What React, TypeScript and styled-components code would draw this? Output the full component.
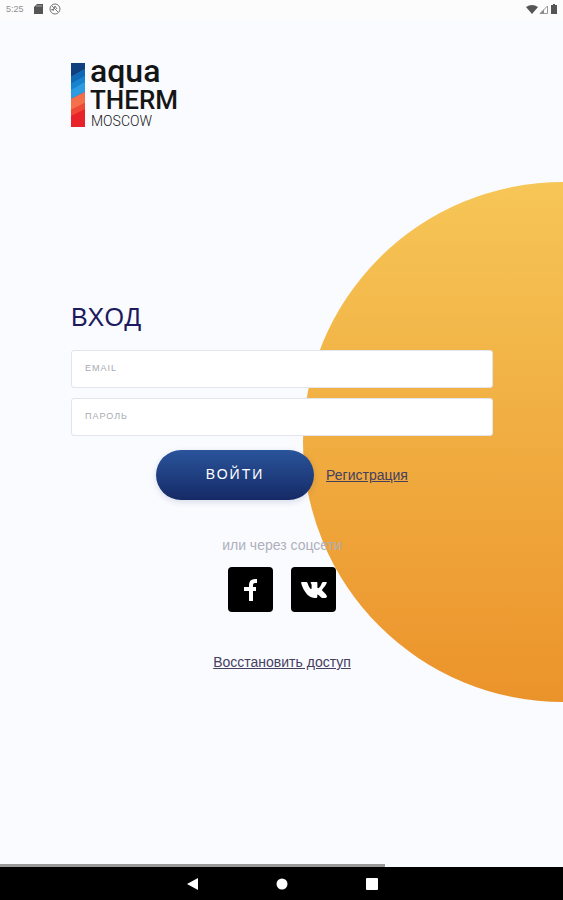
import React from 'react';
import styled, { createGlobalStyle } from 'styled-components';

const GlobalStyle = createGlobalStyle`
  * {
    box-sizing: border-box;
  }

  body {
    margin: 0;
    background: #fafbff;
    font-family: 'Liberation Sans', Arial, sans-serif;
  }
`;

const Page = styled.div`
  position: relative;
  display: flex;
  flex-direction: column;
  min-height: 100vh;
  overflow: hidden;
`;

// the sun behind the form, half of it is off screen
const Sun = styled.div`
  position: absolute;
  top: 182px;
  right: -260px;
  width: 520px;
  height: 520px;
  border-radius: 50%;
  background: linear-gradient(#f6c656, #eb932b);
`;

const StatusBar = styled.header`
  display: flex;
  align-items: center;
  height: 20px;
  padding: 0 4px 2px 6px;
  background: #fcfcfd;
  color: #909090;
  font-size: 9px;
`;

const StatusIcons = styled.div<{ $end?: boolean }>`
  display: flex;
  align-items: center;
  gap: ${({ $end }) => ($end ? '1px' : '6px')};
  margin-left: ${({ $end }) => ($end ? 'auto' : '10px')};
`;

const Main = styled.main`
  position: relative;
  display: flex;
  flex: 1;
  flex-direction: column;
  padding: 43px 70px 0 71px;
`;

const Logo = styled.div`
  display: flex;
  gap: 5px;
  height: 64px;
  font-family: Roboto, sans-serif;
  color: #151515;
`;

const LogoText = styled.div`
  display: flex;
  flex-direction: column;
`;

const LogoLine = styled.span<{ $size: number; $height: number; $gap?: number; $thin?: boolean }>`
  margin-bottom: ${({ $gap = 0 }) => $gap}px;
  font-size: ${({ $size }) => $size}px;
  line-height: ${({ $height }) => $height}px;
  font-weight: ${({ $thin }) => ($thin ? 300 : 500)};
  padding-left: ${({ $thin }) => ($thin ? 1 : 0)}px;
`;

const Form = styled.form`
  display: flex;
  flex-direction: column;
  margin-top: 174px;
`;

const Title = styled.h1`
  margin: 0 0 17px;
  color: #1d1a5e;
  font-size: 25px;
  font-weight: 400;
  line-height: 32px;
  letter-spacing: 1px;
`;

const Field = styled.input`
  width: 100%;
  height: 38px;
  margin-bottom: 10px;
  padding: 0 13px 2px;
  border: 1px solid #e4e5ec;
  border-radius: 3px;
  background: #fff;
  color: #1d1a5e;
  font-family: inherit;
  font-size: 9px;
  letter-spacing: 1px;

  &::placeholder {
    color: #a9aab2;
    opacity: 1;
  }
`;

const Actions = styled.div`
  display: flex;
  align-items: center;
  justify-content: center;
  gap: 12px;
  margin-top: 4px;
`;

const SubmitButton = styled.button`
  width: 158px;
  height: 50px;
  padding: 0 0 2px;
  border: 0;
  border-radius: 25px;
  background: linear-gradient(#2a549b, #152a66);
  box-shadow: 0 2px 6px rgba(21, 42, 102, 0.15);
  color: #fff;
  font-family: inherit;
  font-size: 14px;
  letter-spacing: 2px;
  cursor: pointer;
`;

const TextLink = styled.a`
  color: #45405f;
  font-size: 14px;
  line-height: 20px;
`;

const Social = styled.section`
  display: flex;
  flex-direction: column;
  align-items: center;
  margin-top: 35px;
`;

const SocialTitle = styled.p`
  margin: 0 0 12px;
  color: #aeafbb;
  font-size: 14px;
  line-height: 20px;
`;

const SocialList = styled.div`
  display: flex;
  gap: 18px;
`;

const SocialButton = styled.button`
  display: flex;
  align-items: center;
  justify-content: center;
  width: 45px;
  height: 45px;
  padding: 0;
  border: 0;
  border-radius: 4px;
  background: #000;
  color: #fff;
  cursor: pointer;
`;

const Restore = styled.div`
  margin-top: 40px;
  text-align: center;
`;

const Progress = styled.div`
  position: relative;
  height: 3px;
`;

const ProgressValue = styled.div`
  width: 68.4%;
  height: 100%;
  background: #999;
`;

const NavBar = styled.nav`
  position: relative;
  display: flex;
  align-items: center;
  justify-content: center;
  gap: 66px;
  height: 33px;
  background: #000;
`;

const NavButton = styled.button`
  display: flex;
  align-items: center;
  justify-content: center;
  width: 24px;
  height: 24px;
  padding: 0;
  border: 0;
  background: none;
  color: #fff;
`;

const LogoMark = () => (
  <svg width="14" height="64" viewBox="0 0 14 64" aria-hidden="true">
    <rect width="14" height="64" fill="#e8222b" />
    <path d="M0 0H14V29L0 36Z" fill="#2d9be0" />
    <path d="M0 0H14V6L0 14Z" fill="#123f7d" />
    <path d="M0 14L14 6V13L0 21Z" fill="#0f69b4" />
    <path d="M0 21L14 13V19L0 27Z" fill="#1683d0" />
    <path d="M0 36L14 29V40L0 47Z" fill="#f4704a" />
    <path d="M0 47L14 40V46L0 53Z" fill="#ee4936" />
  </svg>
);

const FacebookIcon = () => (
  <svg width="26" height="24" viewBox="0 0 26 24" fill="none" stroke="currentColor" strokeWidth="4">
    <path d="M19 3H17Q13 3 13 7V23M6 11H18" />
  </svg>
);

const VkIcon = () => (
  <svg width="26" height="20" viewBox="0 0 26 20" fill="currentColor">
    <path d="M1 2H5C6 2 6.300 2.500 6.600 3.300C7.700 6.500 9 9 10 9C10.500 9 10.600 8.500 10.600 7.500V5C10.500 3.600 9.600 3.500 9.600 2.800C9.600 2.300 10 2 10.500 2H15.500C16.200 2 16.400 2.400 16.400 3.200V7.300C16.400 8 16.700 8.300 17 8.300C17.500 8.300 18 7.900 18.700 7.100C19.900 5.700 20.600 3.500 20.800 3C21.100 2.300 21.500 2 22.200 2H24.800C25.700 2 25.900 2.500 25.600 3.200C25 5 21.400 9.200 21.400 9.300C21 9.800 20.900 10.100 21.400 10.700C22.400 11.900 25.600 14.400 25.900 16.300C26 17.400 25.200 18 24.200 18H21.400C20.200 18 19.900 17 17.900 15.200C17.300 14.600 16.900 14.400 16.700 14.400C16.400 14.400 16.300 14.600 16.300 15.300V16.800C16.300 17.600 16 18 13.900 18C9.700 18 6.500 15.600 4.300 12.100C1.700 8.100 .3 4.100 .2 3C.1 2.300 .4 2 1 2Z" />
  </svg>
);

const App: React.FC = () => {
  return (
    <Page>
      <GlobalStyle />
      <Sun />
      <StatusBar>
        <span>5:25</span>
        <StatusIcons>
          <svg width="9" height="10" viewBox="0 0 9 10">
            <path d="M3 0H9V10H0V3Z" fill="#555" />
            <path d="M3 1V3M5 1V3M7 1V3" stroke="#aaa" />
          </svg>
          <svg width="12" height="12" viewBox="0 0 12 12" fill="none" stroke="#777">
            <circle cx="6" cy="6" r="5" />
            <path d="M3 3L9 9M4 8L6 3L8 6M2 7L5 6" />
          </svg>
        </StatusIcons>
        <StatusIcons $end>
          <svg width="12" height="9" viewBox="0 0 12 9">
            <path d="M0 2Q6 -2 12 2L6 9Z" fill="#555" />
          </svg>
          <svg width="9" height="9" viewBox="0 0 9 9">
            <path d="M1 8.500L8.500 1V8.500Z" fill="none" stroke="#999" />
            <path d="M1 8.500L5 4.500V8.500Z" fill="#888" />
          </svg>
          <svg width="10" height="10" viewBox="0 0 10 10">
            <path d="M4 0H6V1H8V10H2V1H4Z" fill="#555" />
          </svg>
        </StatusIcons>
      </StatusBar>

      <Main>
        <Logo>
          <LogoMark />
          <LogoText>
            <LogoLine $size={32} $height={16} $gap={7}>aqua</LogoLine>
            <LogoLine $size={26} $height={28}>THERM</LogoLine>
            <LogoLine $size={14} $height={14} $thin>MOSCOW</LogoLine>
          </LogoText>
        </Logo>

        <Form onSubmit={(e) => e.preventDefault()}>
          <Title>ВХОД</Title>
          <Field type="email" placeholder="EMAIL" aria-label="Email" />
          <Field type="password" placeholder="ПАРОЛЬ" aria-label="Пароль" />
          <Actions>
            <SubmitButton type="submit">ВОЙТИ</SubmitButton>
            <TextLink href="#register">Регистрация</TextLink>
          </Actions>
        </Form>

        <Social>
          <SocialTitle>или через соцсети</SocialTitle>
          <SocialList>
            <SocialButton type="button" aria-label="Facebook">
              <FacebookIcon />
            </SocialButton>
            <SocialButton type="button" aria-label="VK">
              <VkIcon />
            </SocialButton>
          </SocialList>
        </Social>

        <Restore>
          <TextLink href="#restore">Восстановить доступ</TextLink>
        </Restore>
      </Main>

      <Progress>
        <ProgressValue />
      </Progress>
      <NavBar>
        <NavButton aria-label="Back">
          <svg width="12" height="14" viewBox="0 0 12 14" fill="currentColor">
            <path d="M12 1V13L1 7Z" />
          </svg>
        </NavButton>
        <NavButton aria-label="Home">
          <svg width="12" height="12" viewBox="0 0 12 12" fill="currentColor">
            <circle cx="6" cy="6" r="5.500" />
          </svg>
        </NavButton>
        <NavButton aria-label="Recent">
          <svg width="12" height="12" viewBox="0 0 12 12" fill="currentColor">
            <rect width="12" height="12" rx="1" />
          </svg>
        </NavButton>
      </NavBar>
    </Page>
  );
};

export default App;
